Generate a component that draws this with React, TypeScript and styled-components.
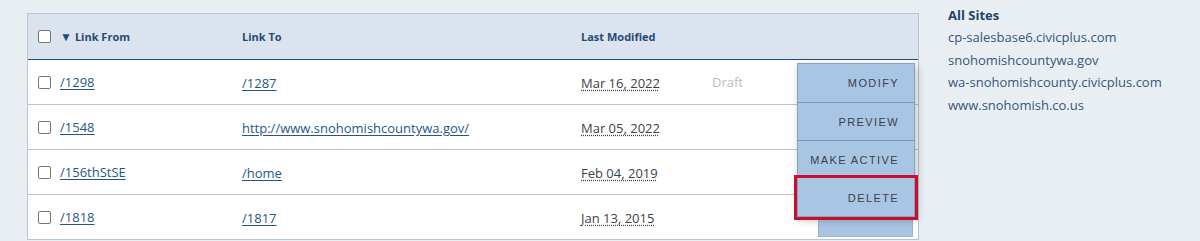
import React from 'react';
import styled, { createGlobalStyle } from 'styled-components';

const GlobalStyle = createGlobalStyle`
    body {
        margin: 0;
        background: #e9eef3;
        font-family: "Open Sans", "Liberation Sans", sans-serif;
    }
`;

const Page = styled.div`
    display: flex;
    align-items: flex-start;
    padding: 13px 0 0 27px;
    height: 241px;
    box-sizing: border-box;
    overflow: hidden;
`;

const TableWrap = styled.div`
    position: relative;
    width: 892px;
    border: 1px solid #b7c4d3;
    border-bottom: none;
    background: #ffffff;
    box-sizing: border-box;
`;

const HeaderRow = styled.div`
    display: grid;
    grid-template-columns: 214px 339px 1fr;
    align-items: center;
    height: 45px;
    background: #dae3ee;
    border-bottom: 1px solid #1d4f7e;
`;

const Row = styled.div`
    display: grid;
    grid-template-columns: 214px 339px 131px 1fr;
    align-items: center;
    height: 44px;
    border-bottom: 1px solid #b7c4d3;
`;

const FirstCell = styled.div`
    display: flex;
    align-items: center;
    gap: 9px;
    padding-left: 10px;
`;

const Check = styled.span`
    display: inline-block;
    width: 11px;
    height: 11px;
    border: 1px solid #767676;
    border-radius: 2px;
    background: #fff;
`;

const HeadText = styled.span`
    font-size: 11px;
    font-weight: 700;
    color: #264b73;
`;

const Arrow = styled.span`
    font-size: 12px;
    margin-right: 3px;
    color: #1d4f7e;
`;

const LinkText = styled.a`
    font-size: 13px;
    color: #1f5788;
    text-decoration: underline;
    text-underline-offset: 2px;
`;

const DateText = styled.abbr`
    font-size: 13px;
    color: #3b3f47;
    text-decoration: underline dotted;
    text-underline-offset: 2px;
`;

const Status = styled.span`
    font-size: 13px;
    color: #b9bec5;
    margin-right: auto;
`;

const ActionCell = styled.div`
    display: flex;
    justify-content: flex-end;
    padding-right: 5px;
`;

const ActionButton = styled.div`
    width: 95px;
    height: 32px;
    margin-top: 8px;
    background: #a9c5e3;
    border: 1px solid #97b3d0;
    box-sizing: border-box;
`;

const Menu = styled.div`
    position: absolute;
    left: 769px;
    top: 49px;
    width: 118px;
    background: #a8c5e3;
    border: 1px solid #8aa2bb;
    box-shadow: 2px 3px 8px rgba(0, 0, 0, 0.25);
    box-sizing: border-box;
    z-index: 2;
`;

const MenuItem = styled.div<{ focused?: boolean }>`
    height: 38px;
    box-sizing: border-box;
    display: flex;
    align-items: center;
    justify-content: flex-end;
    padding-right: 15px;
    font-family: "Liberation Sans", sans-serif;
    font-size: 11px;
    letter-spacing: 1.4px;
    color: #3c414b;
    border-top: 1px solid #7f97b0;
    &:first-child {
        border-top: none;
    }
    ${props => props.focused ? `
        outline: 3px solid #c8102e;
        outline-offset: 1px;
        border-top: none;
        margin-top: 1px;
        height: 37px;
    ` : ''}
`;

const Sidebar = styled.div`
    margin-left: 29px;
    margin-top: -7px;
    display: flex;
    flex-direction: column;
    gap: 4px;
`;

const SideTitle = styled.div`
    font-size: 13px;
    font-weight: 700;
    color: #1f4468;
    line-height: 18px;
`;

const SideLink = styled.div`
    font-size: 13px;
    color: #36577c;
    line-height: 18.5px;
`;

const rows = [
    { from: '/1298', to: '/1287', date: 'Mar 16, 2022', status: 'Draft' },
    { from: '/1548', to: 'http://www.snohomishcountywa.gov/', date: 'Mar 05, 2022', status: '' },
    { from: '/156thStSE', to: '/home', date: 'Feb 04, 2019', status: '' },
    { from: '/1818', to: '/1817', date: 'Jan 13, 2015', status: '' },
];

const sites = [
    'cp-salesbase6.civicplus.com',
    'snohomishcountywa.gov',
    'wa-snohomishcounty.civicplus.com',
    'www.snohomish.co.us',
];

export default function App() {
    return (
        <Page>
            <GlobalStyle/>
            <TableWrap>
                <HeaderRow>
                    <FirstCell>
                        <Check/>
                        <HeadText><Arrow>▼</Arrow>Link From</HeadText>
                    </FirstCell>
                    <HeadText>Link To</HeadText>
                    <HeadText>Last Modified</HeadText>
                </HeaderRow>
                {rows.map((r, i) => (
                    <Row key={i}>
                        <FirstCell>
                            <Check/>
                            <LinkText>{r.from}</LinkText>
                        </FirstCell>
                        <div><LinkText>{r.to}</LinkText></div>
                        <div><DateText>{r.date}</DateText></div>
                        <ActionCell>
                            <Status>{r.status}</Status>
                            {i === rows.length - 1 ? <ActionButton/> : null}
                        </ActionCell>
                    </Row>
                ))}
                <Menu>
                    <MenuItem>MODIFY</MenuItem>
                    <MenuItem>PREVIEW</MenuItem>
                    <MenuItem>MAKE ACTIVE</MenuItem>
                    <MenuItem focused>DELETE</MenuItem>
                </Menu>
            </TableWrap>
            <Sidebar>
                <SideTitle>All Sites</SideTitle>
                {sites.map(s => <SideLink key={s}>{s}</SideLink>)}
            </Sidebar>
        </Page>
    );
}
